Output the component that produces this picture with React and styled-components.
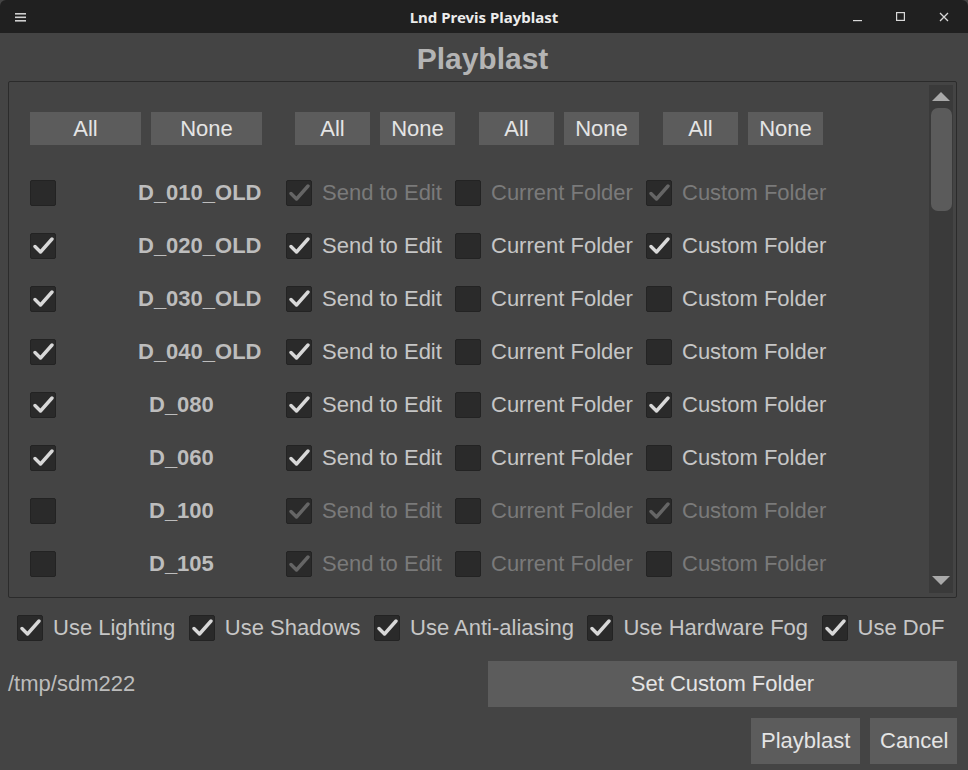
import React from 'react';
import styled, { createGlobalStyle } from 'styled-components';

const GlobalStyle = createGlobalStyle`
  html, body {
    margin: 0;
    padding: 0;
    background: #444444;
  }
  body {
    font-family: "Liberation Sans", Arial, sans-serif;
  }
`;

const shots = [
  { name: 'D_010_OLD', on: false, send: true, current: false, custom: true },
  { name: 'D_020_OLD', on: true, send: true, current: false, custom: true },
  { name: 'D_030_OLD', on: true, send: true, current: false, custom: false },
  { name: 'D_040_OLD', on: true, send: true, current: false, custom: false },
  { name: 'D_080', on: true, send: true, current: false, custom: true, short: true },
  { name: 'D_060', on: true, send: true, current: false, custom: false, short: true },
  { name: 'D_100', on: false, send: true, current: false, custom: true, short: true },
  { name: 'D_105', on: false, send: true, current: false, custom: false, short: true },
];

const options = ['Use Lighting', 'Use Shadows', 'Use Anti-aliasing', 'Use Hardware Fog', 'Use DoF'];

const Window = styled.div`
  width: 968px;
  height: 770px;
  display: flex;
  flex-direction: column;
  background: #444444;
  overflow: hidden;
`;

const TitleBar = styled.div`
  height: 33px;
  flex: none;
  background: #202020;
  border-radius: 6px 6px 0 0;
  display: grid;
  grid-template-columns: 140px 1fr 140px;
  align-items: center;
  color: #ececec;
`;

const TitleText = styled.div`
  text-align: center;
  font-family: "Noto Sans", sans-serif;
  font-weight: 700;
  font-size: 15px;
`;

const MenuIcon = styled.div`
  padding-left: 15px;
  display: flex;
  align-items: center;
`;

const WinControls = styled.div`
  display: flex;
  justify-content: flex-end;
  align-items: center;
  gap: 34px;
  padding-right: 19px;
`;

const Body = styled.div`
  flex: 1;
  display: flex;
  flex-direction: column;
  padding: 0 11px 0 8px;
`;

const Heading = styled.h1`
  margin: 0;
  height: 48px;
  line-height: 52px;
  text-align: center;
  font-size: 30px;
  font-weight: 700;
  color: #b4b4b4;
`;

const Panel = styled.div`
  height: 515px;
  border: 1px solid #2b2b2b;
  border-radius: 2px;
  display: flex;
  overflow: hidden;
`;

const PanelContent = styled.div`
  flex: 1;
  padding: 30px 0 0 21px;
  overflow: hidden;
`;

const ButtonRow = styled.div`
  display: flex;
  align-items: center;
`;

const ButtonPair = styled.div`
  display: flex;
  gap: 10px;
  margin-right: ${(p) => p.$after}px;
`;

const Button = styled.button`
  height: ${(p) => (p.$tall ? 46 : 33)}px;
  width: ${(p) => (p.$width ? `${p.$width}px` : 'auto')};
  padding: 0 10px;
  border: none;
  border-radius: 0;
  background: #5c5c5c;
  color: #e4e4e4;
  font-family: "Liberation Sans", Arial, sans-serif;
  font-size: 22px;
  cursor: pointer;
`;

const ShotGrid = styled.div`
  margin-top: 21px;
  display: grid;
  grid-template-columns: 26px 230px 169px 191px 1fr;
  grid-auto-rows: 53px;
  align-items: center;
`;

const ShotName = styled.div`
  padding-left: ${(p) => (p.$short ? 93 : 82)}px;
  font-size: 22px;
  font-weight: 700;
  color: #bdbdbd;
  white-space: nowrap;
`;

const CheckCell = styled.label`
  display: flex;
  align-items: center;
  gap: 10px;
  font-size: 22px;
  white-space: nowrap;
  color: ${(p) => (p.$disabled ? '#7a7a7a' : '#c6c6c6')};
`;

const Box = styled.span`
  width: 26px;
  height: 26px;
  flex: none;
  box-sizing: border-box;
  background: #2a2a2a;
  border: 1px solid #232323;
  border-radius: 2px;
  display: flex;
  align-items: center;
  justify-content: center;
`;

const ScrollTrack = styled.div`
  width: 24px;
  margin: 3px 3px 4px 0;
  background: #3a3a3a;
  display: flex;
  flex-direction: column;
  align-items: center;
  padding: 7px 0 8px;
  box-sizing: border-box;
`;

const Thumb = styled.div`
  width: 21px;
  height: 103px;
  margin-top: 7px;
  border-radius: 7px;
  background: #5b5b5b;
`;

const Spacer = styled.div`
  flex: 1;
`;

const OptionsRow = styled.div`
  margin-top: 17px;
  padding-left: 9px;
  display: flex;
  gap: 13.5px;
`;

const FolderRow = styled.div`
  margin-top: 20px;
  display: flex;
  align-items: center;
`;

const PathLabel = styled.div`
  flex: 1;
  font-size: 22px;
  color: #bcbcbc;
`;

const ActionRow = styled.div`
  margin-top: 11px;
  display: flex;
  justify-content: flex-end;
  gap: 10px;
`;

function CheckBox({ checked, disabled }) {
  const color = disabled ? '#656565' : '#d8d8d8';
  return (
    <Box>
      {checked && (
        <svg width="22" height="18" viewBox="0 0 22 18">
          <path d="M3 9.5 L8.5 15 L20 2" fill="none" stroke={color} strokeWidth="3.4" strokeLinecap="round" strokeLinejoin="round" />
        </svg>
      )}
    </Box>
  );
}

function LabeledCheck({ checked, disabled, children }) {
  return (
    <CheckCell $disabled={disabled}>
      <CheckBox checked={checked} disabled={disabled} />
      {children}
    </CheckCell>
  );
}

function Arrow({ down }) {
  return (
    <svg width="18" height="9" viewBox="0 0 18 9">
      <polygon points={down ? '0,0 18,0 9,9' : '0,9 18,9 9,0'} fill="#a9a9a9" />
    </svg>
  );
}

export default function App() {
  return (
    <Window>
      <GlobalStyle />
      <TitleBar>
        <MenuIcon>
          <svg width="11" height="10" viewBox="0 0 11 10">
            <rect x="0" y="1" width="11" height="1.6" fill="#d0d0d0" />
            <rect x="0" y="4.5" width="11" height="1.6" fill="#d0d0d0" />
            <rect x="0" y="8" width="11" height="1.6" fill="#d0d0d0" />
          </svg>
        </MenuIcon>
        <TitleText>Lnd Previs Playblast</TitleText>
        <WinControls>
          <svg width="9" height="10" viewBox="0 0 9 10">
            <rect x="0" y="8" width="9" height="1.2" fill="#d8d8d8" />
          </svg>
          <svg width="9" height="9" viewBox="0 0 9 9">
            <rect x="0.6" y="0.6" width="7.8" height="7.8" fill="none" stroke="#d8d8d8" strokeWidth="1.2" />
          </svg>
          <svg width="10" height="10" viewBox="0 0 10 10">
            <path d="M1 1 L9 9 M9 1 L1 9" stroke="#d8d8d8" strokeWidth="1.3" />
          </svg>
        </WinControls>
      </TitleBar>

      <Body>
        <Heading>Playblast</Heading>
        <Panel>
          <PanelContent>
            <ButtonRow>
              <ButtonPair $after={33}>
                <Button $width={111}>All</Button>
                <Button $width={111}>None</Button>
              </ButtonPair>
              <ButtonPair $after={24}>
                <Button $width={75}>All</Button>
                <Button $width={75}>None</Button>
              </ButtonPair>
              <ButtonPair $after={24}>
                <Button $width={75}>All</Button>
                <Button $width={75}>None</Button>
              </ButtonPair>
              <ButtonPair $after={0}>
                <Button $width={75}>All</Button>
                <Button $width={75}>None</Button>
              </ButtonPair>
            </ButtonRow>

            <ShotGrid>
              {shots.map((s) => (
                <React.Fragment key={s.name}>
                  <CheckBox checked={s.on} />
                  <ShotName $short={s.short}>{s.name}</ShotName>
                  <LabeledCheck checked={s.send} disabled={!s.on}>Send to Edit</LabeledCheck>
                  <LabeledCheck checked={s.current} disabled={!s.on}>Current Folder</LabeledCheck>
                  <LabeledCheck checked={s.custom} disabled={!s.on}>Custom Folder</LabeledCheck>
                </React.Fragment>
              ))}
            </ShotGrid>
          </PanelContent>

          <ScrollTrack>
            <Arrow />
            <Thumb />
            <Spacer />
            <Arrow down />
          </ScrollTrack>
        </Panel>

        <OptionsRow>
          {options.map((o) => (
            <LabeledCheck key={o} checked>{o}</LabeledCheck>
          ))}
        </OptionsRow>

        <FolderRow>
          <PathLabel>/tmp/sdm222</PathLabel>
          <Button $tall $width={469}>Set Custom Folder</Button>
        </FolderRow>

        <ActionRow>
          <Button $tall $width={109}>Playblast</Button>
          <Button $tall $width={87}>Cancel</Button>
        </ActionRow>
      </Body>
    </Window>
  );
}
